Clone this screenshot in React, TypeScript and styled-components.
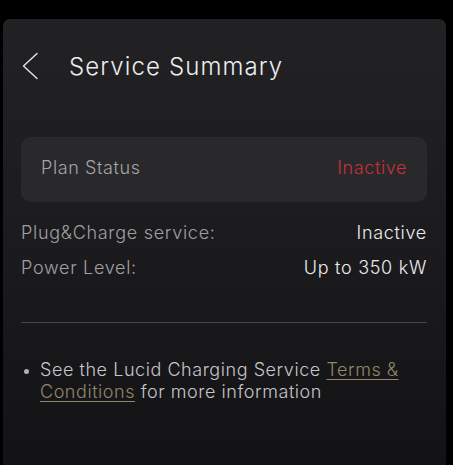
import React from "react";
import styled, { createGlobalStyle } from "styled-components";

const Global = createGlobalStyle`
  html, body { margin: 0; padding: 0; background: #000; }
  body { font-family: "Inter", "Liberation Sans", sans-serif; -webkit-font-smoothing: antialiased; }
`;

const Screen = styled.div`
  width: 453px;
  height: 465px;
  background: #000;
  padding: 19px 7px 0 3px;
  box-sizing: border-box;
  overflow: hidden;
`;

const Panel = styled.div`
  height: 446px;
  border-radius: 7px 7px 0 0;
  background: linear-gradient(180deg, #222224 0%, #1c1c1f 45%, #131316 100%);
  padding: 33px 19px 0 18px;
  box-sizing: border-box;
  font-weight: 300;
`;

const Header = styled.div`
  display: flex;
  align-items: center;
  height: 28px;
`;

const BackButton = styled.button`
  background: none;
  border: 0;
  padding: 0;
  margin: 0 0 0 1px;
  width: 16px;
  height: 28px;
  display: flex;
  align-items: center;
  cursor: pointer;
`;

const Title = styled.h1`
  margin: 0 0 0 31px;
  font-size: 24px;
  font-weight: 300;
  color: #ededed;
  letter-spacing: 1.1px;
`;

const StatusCard = styled.div`
  margin-top: 57px;
  height: 65px;
  border-radius: 10px;
  background: #29292b;
  display: flex;
  align-items: center;
  justify-content: space-between;
  padding: 0 20px 4px;
  box-sizing: border-box;
  letter-spacing: 0.6px;
`;

const CardLabel = styled.span`
  font-size: 18px;
  color: #a4a4a6;
`;

const CardValue = styled.span<{ $tone: "red" | "white" }>`
  font-size: 18px;
  color: ${(p) => (p.$tone === "red" ? "#c6313b" : "#e8e8e8")};
`;

const Details = styled.div`
  margin-top: 13px;
  letter-spacing: 0.7px;
`;

const DetailRow = styled.div`
  display: flex;
  justify-content: space-between;
  line-height: 35px;
  font-size: 18px;
`;

const DetailLabel = styled.span`
  color: #a0a0a2;
`;

const DetailValue = styled.span`
  color: #ededed;
`;

const Divider = styled.hr`
  margin: 37px 0 0;
  border: 0;
  border-top: 1px solid #47474a;
`;

const Notes = styled.ul`
  margin: 36px 0 0;
  padding: 0 0 0 19px;
  color: #c6c6c8;
  font-size: 18px;
  line-height: 22px;
  letter-spacing: 0.55px;
  li::marker { color: #b0b0b2; font-size: 14px; }
`;

const Link = styled.a`
  color: #918669;
  text-decoration: underline;
  text-underline-offset: 3px;
  text-decoration-thickness: 1px;
`;

export default function App() {
  return (
    <>
      <Global />
      <Screen>
        <Panel>
          <Header>
            <BackButton aria-label="Back">
              <svg width="16" height="28" viewBox="0 0 16 28" fill="none">
                <path d="M15 1.5 L1.5 14 L15 26.5" stroke="#e6e6e6" strokeWidth="1.4" strokeLinecap="round" strokeLinejoin="round" />
              </svg>
            </BackButton>
            <Title>Service Summary</Title>
          </Header>
          <StatusCard>
            <CardLabel>Plan Status</CardLabel>
            <CardValue $tone="red">Inactive</CardValue>
          </StatusCard>
          <Details>
            <DetailRow>
              <DetailLabel>Plug&amp;Charge service:</DetailLabel>
              <DetailValue>Inactive</DetailValue>
            </DetailRow>
            <DetailRow>
              <DetailLabel>Power Level:</DetailLabel>
              <DetailValue>Up to 350 kW</DetailValue>
            </DetailRow>
          </Details>
          <Divider />
          <Notes>
            <li>
              See the Lucid Charging Service <Link href="#">Terms &amp; Conditions</Link> for more information
            </li>
          </Notes>
        </Panel>
      </Screen>
    </>
  );
}
